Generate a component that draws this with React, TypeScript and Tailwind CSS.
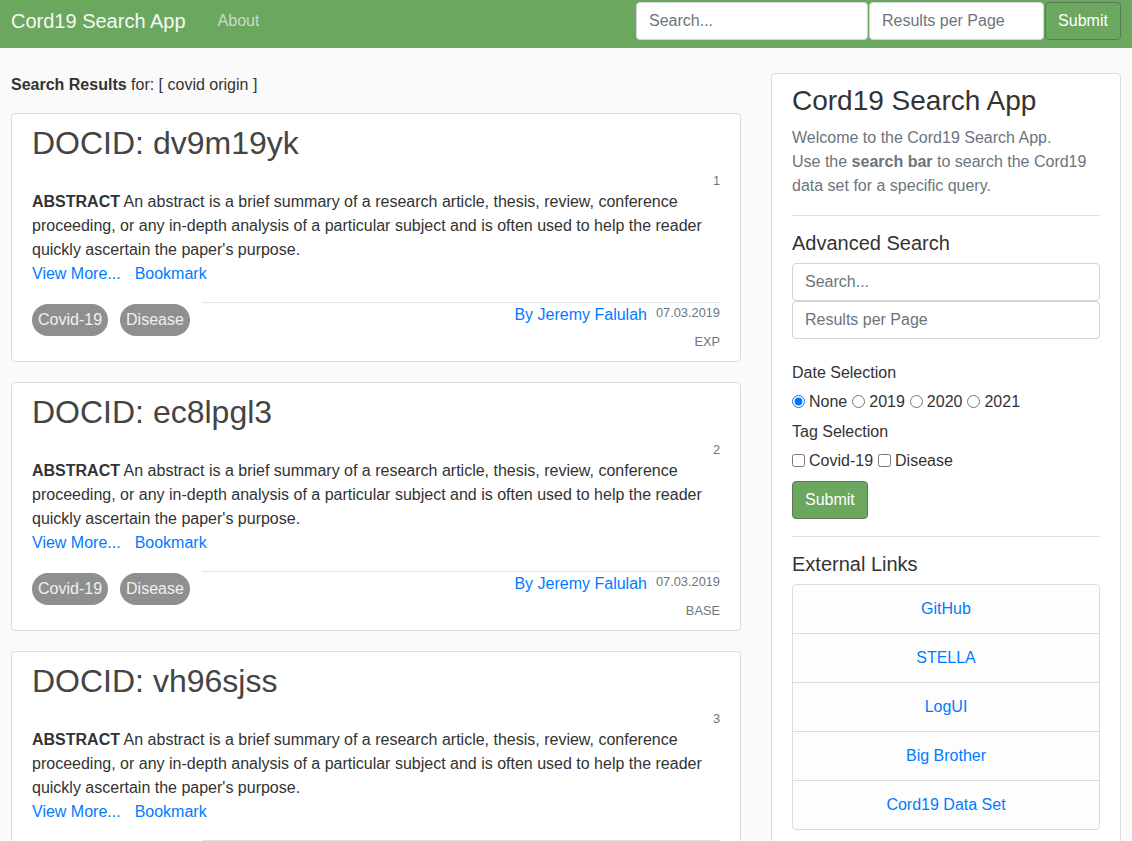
import React from 'react';

const results = [
  { id: 'dv9m19yk', rank: 1, system: 'EXP' },
  { id: 'ec8lpgl3', rank: 2, system: 'BASE' },
  { id: 'vh96sjss', rank: 3, system: 'EXP' },
];

const links = ['GitHub', 'STELLA', 'LogUI', 'Big Brother', 'Cord19 Data Set'];

function ResultCard({ id, rank, system }: { id: string; rank: number; system: string }) {
  return (
    <div className="bg-white border border-[#dcdcdc] rounded px-5 pt-[8px] pb-[10px]">
      <h2 className="text-[32px] leading-[42px] text-[#444]">DOCID: {id}</h2>
      <div className="mt-[7px] text-right text-[12.8px] leading-[19px] text-[#6c757d]">{rank}</div>
      <p className="text-[16px] leading-6 text-[#333]">
        <b>ABSTRACT</b> An abstract is a brief summary of a research article, thesis, review, conference
        proceeding, or any in-depth analysis of a particular subject and is often used to help the reader
        quickly ascertain the paper's purpose.
      </p>
      <div className="flex gap-[14px] text-[16px] leading-6 text-[#007bff]">
        <a href="#">View More...</a>
        <a href="#">Bookmark</a>
      </div>
      <div className="mt-[16px] flex items-start">
        <div className="flex gap-3 pt-[2px] pr-3">
          {['Covid-19', 'Disease'].map(t => (
            <span key={t} className="rounded-full bg-[#8f8f8f] text-[#f0f0f0] px-[6px] py-1 text-[16px] leading-6">
              {t}
            </span>
          ))}
        </div>
        <div className="flex-1 border-t border-[#e3e3e3]">
          <div className="flex justify-end items-start gap-[9px]">
            <a href="#" className="text-[16px] leading-6 text-[#007bff]">By Jeremy Falulah</a>
            <span className="text-[12.8px] leading-[19px] text-[#6c757d]">07.03.2019</span>
          </div>
          <div className="mt-[5px] text-right text-[12.8px] leading-[19px] text-[#6c757d]">{system}</div>
        </div>
      </div>
    </div>
  );
}

export default function App() {
  return (
    <div className="min-h-screen bg-[#fafafa] text-[#333]" style={{ fontFamily: '"Liberation Sans", Arial, sans-serif' }}>
      {/* Navbar */}
      <nav className="h-12 bg-[#6ba75e] flex items-start pt-[2px] pl-[11px] pr-[11px]">
        <div className="h-[38px] flex items-center">
          <span className="text-[20px] text-[#f8f8f8]">Cord19 Search App</span>
          <a href="#" className="ml-8 text-[16px] text-[#c9dcc5]">About</a>
        </div>
        <div className="ml-auto flex gap-px">
          <input
            placeholder="Search..."
            className="w-[232px] h-[38px] rounded bg-white border border-[#ced4da] px-3 text-[16px] text-[#495057] placeholder:text-[#6c757d] outline-none"
          />
          <input
            placeholder="Results per Page"
            className="w-[175px] h-[38px] rounded bg-white border border-[#ced4da] px-3 text-[16px] text-[#495057] placeholder:text-[#6c757d] outline-none"
          />
          <button className="w-[76px] h-[38px] rounded bg-[#6ba75e] border border-[#5b7a56] text-white text-[16px]">Submit</button>
        </div>
      </nav>

      {/* Main */}
      <div className="flex gap-[30px] px-[11px] pt-[25px]">
        <div className="w-[730px]">
          <div className="text-[16px] leading-6">
            <b>Search Results</b> for: [ covid origin ]
          </div>
          <div className="mt-[16px] flex flex-col gap-[20px]">
            {results.map(r => (
              <ResultCard key={r.id} {...r} />
            ))}
          </div>
        </div>

        <aside className="w-[350px] self-start bg-white border border-[#dcdcdc] rounded px-5 pt-[10px] pb-5">
          <h3 className="text-[28px] leading-[33.6px] text-[#333]">Cord19 Search App</h3>
          <p className="mt-[8px] text-[16px] leading-6 text-[#6c757d]">
            Welcome to the Cord19 Search App.<br />
            Use the <b>search bar</b> to search the Cord19 data set for a specific query.
          </p>
          <hr className="mt-[17px] border-t border-[#e0e0e0]" />
          <h5 className="mt-[15px] text-[20px] leading-6 text-[#333]">Advanced Search</h5>
          <input
            placeholder="Search..."
            className="mt-[8px] block w-full h-[38px] rounded bg-white border border-[#ced4da] px-3 text-[16px] placeholder:text-[#6c757d] outline-none"
          />
          <input
            placeholder="Results per Page"
            className="block w-full h-[38px] rounded bg-white border border-[#ced4da] px-3 text-[16px] placeholder:text-[#6c757d] outline-none"
          />
          <div className="mt-[22px] text-[16px] leading-6">Date Selection</div>
          <div className="mt-[5px] flex items-center text-[16px] leading-6">
            {['None', '2019', '2020', '2021'].map((y, i) => (
              <label key={y} className="flex items-center gap-[4px] mr-[5px]">
                <input type="radio" name="date" defaultChecked={i === 0} className="m-0 w-[13px] h-[13px]" />
                {y}
              </label>
            ))}
          </div>
          <div className="mt-[6px] text-[16px] leading-6">Tag Selection</div>
          <div className="mt-[5px] flex items-center text-[16px] leading-6">
            {['Covid-19', 'Disease'].map(t => (
              <label key={t} className="flex items-center gap-[4px] mr-[5px]">
                <input type="checkbox" className="m-0 w-[13px] h-[13px]" />
                {t}
              </label>
            ))}
          </div>
          <button className="mt-[8px] h-[38px] px-3 rounded bg-[#6ba75e] border border-[#5b7a56] text-white text-[16px]">Submit</button>
          <hr className="mt-[17px] border-t border-[#e0e0e0]" />
          <h5 className="mt-[15px] text-[20px] leading-6 text-[#333]">External Links</h5>
          <div className="mt-[8px] border border-[#dcdcdc] rounded bg-[#fdfdfd]">
            {links.map((l, i) => (
              <a
                key={l}
                href="#"
                className={`flex items-center justify-center text-[16px] text-[#007bff] ${i > 0 ? 'h-[49px] border-t border-[#dcdcdc]' : 'h-[48px]'}`}
              >
                {l}
              </a>
            ))}
          </div>
        </aside>
      </div>
    </div>
  );
}
